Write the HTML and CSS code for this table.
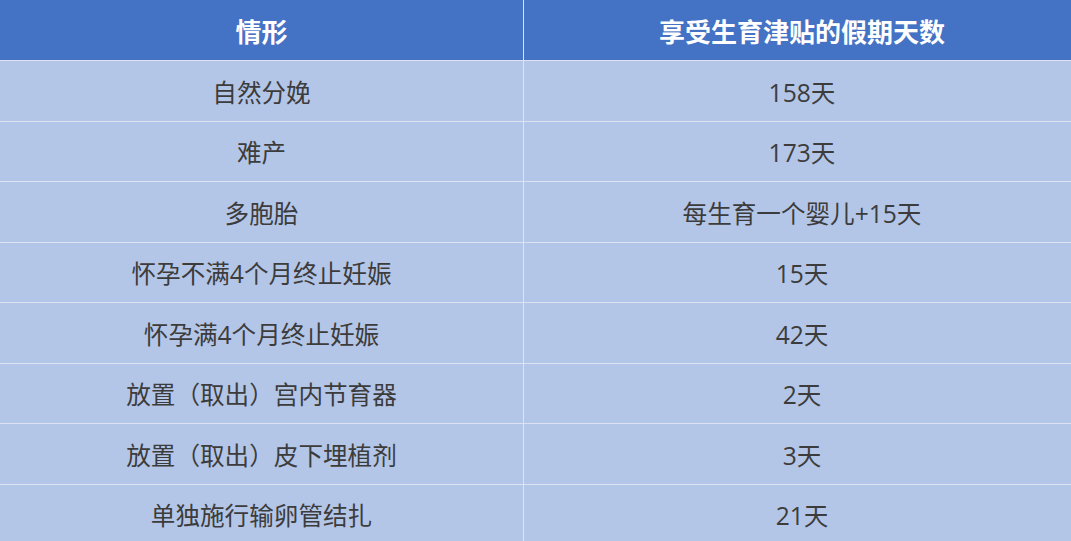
FILE: index.html
```html
<!DOCTYPE html>
<html lang="zh">
<head>
<meta charset="utf-8">
<link rel="stylesheet" href="styles.css">
</head>
<body>
<table class="tbl">
  <thead>
    <tr class="head"><th class="c1">情形</th><th class="c2">享受生育津贴的假期天数</th></tr>
  </thead>
  <tbody>
    <tr><td class="c1">自然分娩</td><td class="c2">158天</td></tr>
    <tr><td class="c1">难产</td><td class="c2">173天</td></tr>
    <tr><td class="c1">多胞胎</td><td class="c2">每生育一个婴儿+15天</td></tr>
    <tr><td class="c1">怀孕不满4个月终止妊娠</td><td class="c2">15天</td></tr>
    <tr><td class="c1">怀孕满4个月终止妊娠</td><td class="c2">42天</td></tr>
    <tr><td class="c1">放置（取出）宫内节育器</td><td class="c2">2天</td></tr>
    <tr><td class="c1">放置（取出）皮下埋植剂</td><td class="c2">3天</td></tr>
    <tr><td class="c1">单独施行输卵管结扎</td><td class="c2">21天</td></tr>
  </tbody>
</table>
</body>
</html>
```
FILE: styles.css
```css
html, body {
  margin: 0;
  padding: 0;
  overflow: hidden;
  background: #b4c6e7;
}
.tbl {
  border-collapse: collapse;
  width: 1080px;
  table-layout: fixed;
  font-family: "Noto Sans CJK SC", "Noto Sans", sans-serif;
}
.tbl th, .tbl td {
  padding: 0;
  text-align: center;
  vertical-align: middle;
  border-bottom: 1px solid #dde3f1;
}
.tbl .c1 {
  width: 523px;
  border-right: 1px solid #dde3f1;
}
.head th {
  height: 60px;
  background: #4472c4;
  color: #ffffff;
  font-size: 26px;
  font-weight: 700;
}
.tbl td {
  height: 59.5px;
  background: #b4c6e7;
  color: #3c3c3c;
  font-family: "Open Sans", "Noto Sans CJK SC", sans-serif;
  font-size: 24.6px;
  font-weight: 400;
}
```
